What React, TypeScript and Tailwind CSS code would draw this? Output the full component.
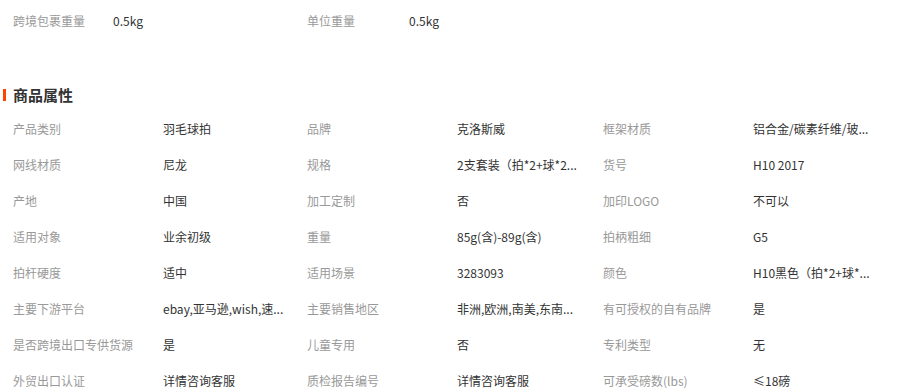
import React from "react";

const rows: [string, string][][] = [
  [["产品类别", "羽毛球拍"], ["品牌", "克洛斯威"], ["框架材质", "铝合金/碳素纤维/玻..."]],
  [["网线材质", "尼龙"], ["规格", "2支套装（拍*2+球*2..."], ["货号", "H10 2017"]],
  [["产地", "中国"], ["加工定制", "否"], ["加印LOGO", "不可以"]],
  [["适用对象", "业余初级"], ["重量", "85g(含)-89g(含)"], ["拍柄粗细", "G5"]],
  [["拍杆硬度", "适中"], ["适用场景", "3283093"], ["颜色", "H10黑色（拍*2+球*..."]],
  [["主要下游平台", "ebay,亚马逊,wish,速..."], ["主要销售地区", "非洲,欧洲,南美,东南..."], ["有可授权的自有品牌", "是"]],
  [["是否跨境出口专供货源", "是"], ["儿童专用", "否"], ["专利类型", "无"]],
  [["外贸出口认证", "详情咨询客服"], ["质检报告编号", "详情咨询客服"], ["可承受磅数(lbs)", "≤18磅"]],
];

export default function App() {
  return (
    <div
      className="w-[906px] h-[391px] overflow-hidden bg-white text-[12px]"
      style={{ fontFamily: '"Noto Sans CJK SC", "Noto Sans", sans-serif' }}
    >
      <div className="h-[42px] pl-[13px] grid grid-cols-[294px_296px_1fr] items-center">
        <div className="flex">
          <span className="w-[100px] text-[#999]">跨境包裹重量</span>
          <span className="text-[#333]">0.5kg</span>
        </div>
        <div className="flex">
          <span className="w-[102px] text-[#999]">单位重量</span>
          <span className="text-[#333]">0.5kg</span>
        </div>
        <div />
      </div>
      <div className="mt-[43px] h-[20px] flex items-center">
        <span className="ml-[3px] w-[3px] h-[12px] bg-[#ff4400]" />
        <span className="ml-[7px] text-[15px] font-bold text-[#333]">商品属性</span>
      </div>
      <div className="mt-[6px] pl-[13px]">
        {rows.map((r, i) => (
          <div key={i} className="h-[36px] grid grid-cols-[294px_296px_1fr] items-center">
            {r.map(([k, v], j) => (
              <div key={j} className="flex">
                <span className="w-[150px] shrink-0 text-[#999] whitespace-nowrap">{k}</span>
                <span className="whitespace-nowrap text-[#333]">{v}</span>
              </div>
            ))}
          </div>
        ))}
      </div>
    </div>
  );
}
